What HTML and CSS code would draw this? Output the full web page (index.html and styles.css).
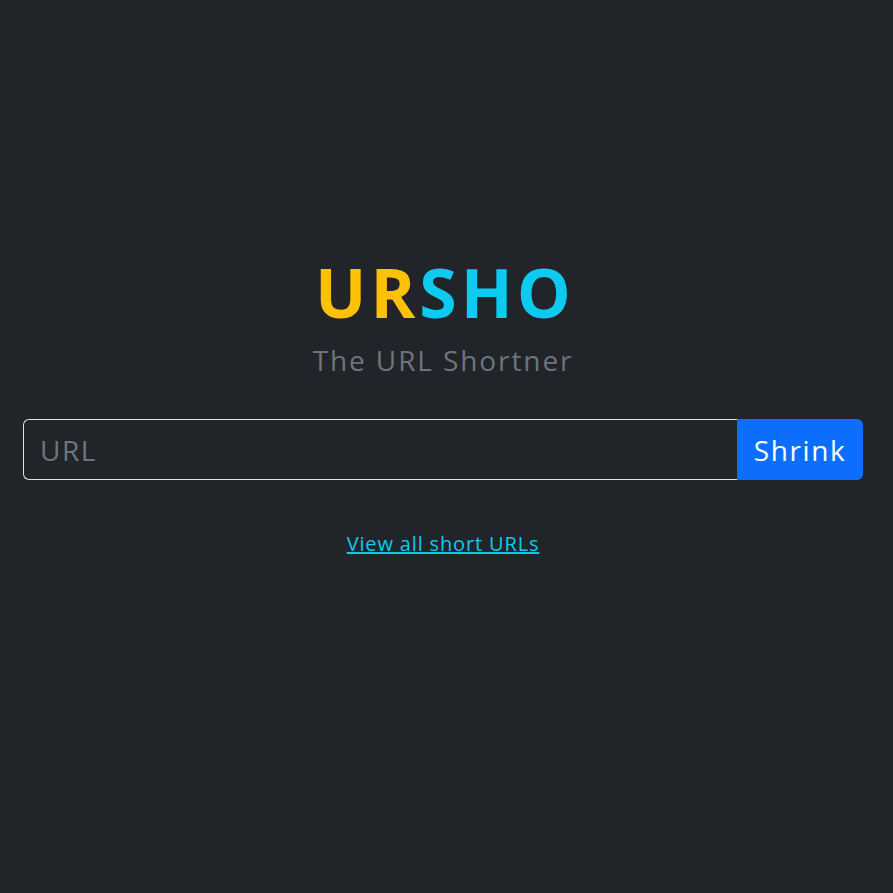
FILE: index.html
```html
<!DOCTYPE html>
<html lang="en">
<head>
<meta charset="utf-8">
<title>URSHO</title>
<link rel="stylesheet" href="styles.css">
</head>
<body>
<main class="page">
  <h1 class="brand"><span class="brand-a">UR</span><span class="brand-b">SHO</span></h1>
  <p class="tagline">The URL Shortner</p>
  <form class="shrink-form">
    <input class="url-input" type="text" placeholder="URL">
    <button class="shrink-btn" type="button">Shrink</button>
  </form>
  <a class="all-link" href="#">View all short URLs</a>
</main>
</body>
</html>
```
FILE: styles.css
```css
html, body {
  margin: 0;
  padding: 0;
  background: #212529;
  height: 100%;
}
body {
  font-family: "Open Sans", "DejaVu Sans", sans-serif;
  color: #dee2e6;
}
.page {
  width: 840px;
  margin-left: 23px;
  padding-top: 252px;
  display: flex;
  flex-direction: column;
  align-items: center;
}
.brand {
  margin: 0;
  font-size: 68px;
  font-weight: 700;
  line-height: 80px;
  letter-spacing: 4px;
  text-indent: 4px;
}
.brand-a { color: #ffc107; }
.brand-b { color: #0dcaf0; }
.tagline {
  margin: 8px 0 0;
  font-size: 28px;
  line-height: 40px;
  color: #6c757d;
  letter-spacing: 1.9px;
}
.shrink-form {
  margin-top: 39px;
  width: 100%;
  display: flex;
  height: 61px;
}
.url-input {
  flex: 1;
  min-width: 0;
  box-sizing: border-box;
  height: 61px;
  background: #212529;
  border: 1px solid #dee2e6;
  border-right: none;
  border-radius: 6px 0 0 6px;
  padding: 0 16px;
  font-family: inherit;
  font-size: 28px;
  letter-spacing: 1.5px;
  color: #dee2e6;
  outline: none;
}
.url-input::placeholder { color: #6c757d; }
.shrink-btn {
  box-sizing: border-box;
  height: 61px;
  width: 126px;
  background: #0d6efd;
  border: none;
  border-radius: 0 6px 6px 0;
  color: #fff;
  font-family: inherit;
  font-size: 28px;
  letter-spacing: 1.6px;
  padding: 0;
}
.all-link {
  margin-top: 49px;
  font-size: 20px;
  line-height: 30px;
  color: #0dcaf0;
  text-decoration: underline;
  letter-spacing: 0.85px;
}
```
